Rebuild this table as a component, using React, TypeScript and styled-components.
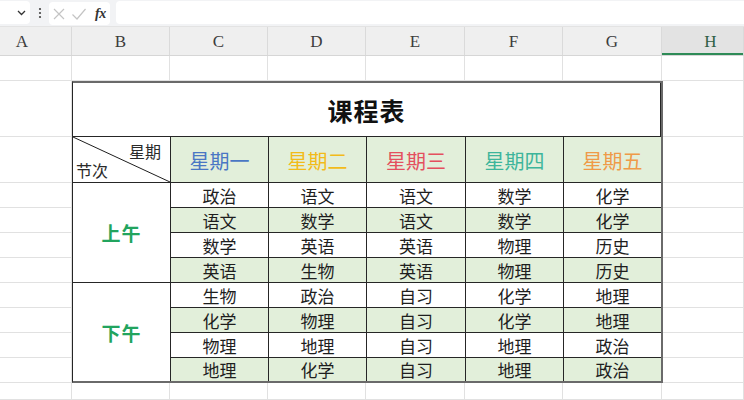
import React from 'react';
import styled, { createGlobalStyle } from 'styled-components';

const GlobalStyle = createGlobalStyle`
  html, body { margin: 0; padding: 0; background: #ffffff; }
  body {
    width: 744px; height: 400px; overflow: hidden;
    font-family: "Noto Sans CJK SC", "Liberation Sans", sans-serif;
  }
  * { box-sizing: border-box; }
`;

const COLS = '72px 98px 98px 98px 99px 98px 99px 82px';
const GRID = '#e1e1e1';
const INK = '#262626';
const FILL = '#e2efda';

const Page = styled.div`
  width: 744px;
  height: 400px;
  display: flex;
  flex-direction: column;
  overflow: hidden;
  background: #fff;
`;

const FormulaBar = styled.div`
  height: 27px;
  flex: none;
  display: flex;
  align-items: flex-start;
  padding-top: 1px;
  background: #f2f3f5;
  border-bottom: 1px solid #e3e3e3;
`;

const NameBox = styled.div`
  width: 30px;
  height: 23px;
  background: #fff;
  border-radius: 0 4px 4px 0;
  display: flex;
  align-items: center;
  justify-content: flex-end;
  padding-right: 4px;
`;

const Grip = styled.div`
  width: 19px;
  height: 23px;
  display: flex;
  align-items: center;
  justify-content: center;
`;

const FxBox = styled.div`
  width: 61px;
  height: 23px;
  margin-top: 1px;
  background: #fff;
  border-radius: 4px;
  display: flex;
  align-items: center;
  padding-left: 3px;
  gap: 5px;
`;

const FxIcon = styled.span`
  font-family: "Liberation Serif", serif;
  font-style: italic;
  font-weight: 700;
  font-size: 14px;
  color: #333;
  margin-left: 3px;
  letter-spacing: -0.5px;
`;

const FormulaInput = styled.div`
  flex: 1;
  height: 23px;
  margin-left: 6px;
  background: #fff;
  border-radius: 4px 0 0 4px;
`;

const ColHeader = styled.div`
  height: 29px;
  flex: none;
  display: grid;
  grid-template-columns: ${COLS};
  background: #efefef;
  border-bottom: 1px solid #d6d6d6;
`;

const ColLabel = styled.div<{ $active?: boolean; $shift?: number }>`
  display: flex;
  align-items: center;
  justify-content: center;
  padding-top: 2px;
  padding-left: ${p => (p.$shift && p.$shift > 0 ? p.$shift : 0)}px;
  padding-right: ${p => (p.$shift && p.$shift < 0 ? -p.$shift : 0)}px;
  font-family: "Liberation Serif", "DejaVu Serif", serif;
  font-size: 17px;
  color: ${p => (p.$active ? '#2f5f45' : '#3c3c3c')};
  background: ${p => (p.$active ? '#e3e3e3' : 'transparent')};
  border-right: 1px solid #dadada;
  box-shadow: ${p => (p.$active ? 'inset 0 -2px 0 #2e8b57' : 'none')};
`;

const Sheet = styled.div`
  flex: 1;
  display: grid;
  grid-template-columns: ${COLS};
  grid-template-rows: 25px 56px 46px repeat(8, 25px) 1fr;
`;

const GridCell = styled.div<{ $col?: number; $row?: number }>`
  border-right: 1px solid ${GRID};
  border-bottom: 1px solid ${GRID};
  grid-column: ${p => p.$col ?? 'auto'};
  grid-row: ${p => p.$row ?? 'auto'};
`;

const Table = styled.div`
  grid-column: 2 / 8;
  grid-row: 2 / 12;
  margin-right: -1px;
  display: grid;
  grid-template-columns: 98px 98px 98px 99px 98px 1fr;
  grid-template-rows: 54px 46px repeat(7, 25px) 1fr;
  border-top: 2px solid #6a6a6a;
  border-right: 2px solid #6a6a6a;
  border-bottom: 2px solid #6a6a6a;
  border-left: 1px solid ${INK};
  background: #fff;
`;

const Cell = styled.div<{ $fill?: boolean; $lastCol?: boolean; $lastRow?: boolean }>`
  display: flex;
  align-items: center;
  justify-content: center;
  background: ${p => (p.$fill ? FILL : '#fff')};
  border-right: ${p => (p.$lastCol ? 'none' : `1px solid ${INK}`)};
  border-bottom: ${p => (p.$lastRow ? 'none' : `1px solid ${INK}`)};
  font-size: 17px;
  color: #1e1e1e;
  line-height: 1;
`;

const TitleCell = styled(Cell)`
  grid-column: 1 / -1;
  font-size: 25px;
  font-weight: 700;
  color: #111;
  letter-spacing: 1px;
  padding-top: 2px;
`;

const DayCell = styled(Cell)<{ $color: string }>`
  font-size: 20px;
  color: ${p => p.$color};
  padding-top: 2px;
`;

const SessionCell = styled(Cell)`
  grid-row: span 4;
  font-size: 19px;
  font-weight: 700;
  color: #22a45e;
  letter-spacing: 1px;
`;

const DiagCell = styled.div`
  position: relative;
  display: flex;
  flex-direction: column;
  justify-content: space-between;
  padding: 6px 9px 2px 3px;
  border-right: 1px solid ${INK};
  border-bottom: 1px solid ${INK};
  font-size: 16px;
  color: #2a2a2a;
  line-height: 1.1;
`;

const DiagTop = styled.span`
  align-self: flex-end;
`;

const DiagBottom = styled.span`
  align-self: flex-start;
`;

const DiagLine = styled.svg`
  position: absolute;
  inset: 0;
  width: 100%;
  height: 100%;
  pointer-events: none;
`;

const days: { name: string; color: string }[] = [
  { name: '星期一', color: '#4a77c4' },
  { name: '星期二', color: '#f2bb1a' },
  { name: '星期三', color: '#e4505e' },
  { name: '星期四', color: '#3db59b' },
  { name: '星期五', color: '#ef9a48' },
];

const schedule: string[][] = [
  ['政治', '语文', '语文', '数学', '化学'],
  ['语文', '数学', '语文', '数学', '化学'],
  ['数学', '英语', '英语', '物理', '历史'],
  ['英语', '生物', '英语', '物理', '历史'],
  ['生物', '政治', '自习', '化学', '地理'],
  ['化学', '物理', '自习', '化学', '地理'],
  ['物理', '地理', '自习', '地理', '政治'],
  ['地理', '化学', '自习', '地理', '政治'],
];

const letters = ['A', 'B', 'C', 'D', 'E', 'F', 'G', 'H'];
const labelShift: Record<string, number> = { A: -27, H: 16 };

export default function App() {
  const bodyRows: React.ReactNode[] = [];
  schedule.forEach((row, r) => {
    if (r % 4 === 0) {
      bodyRows.push(
        <SessionCell key={`s${r}`} $lastRow={r === 4}>
          {r === 0 ? '上午' : '下午'}
        </SessionCell>
      );
    }
    row.forEach((subject, c) => {
      bodyRows.push(
        <Cell
          key={`c${r}-${c}`}
          $fill={r % 2 === 1}
          $lastCol={c === 4}
          $lastRow={r === schedule.length - 1}
        >
          {subject}
        </Cell>
      );
    });
  });

  return (
    <Page>
      <GlobalStyle />
      <FormulaBar>
        <NameBox>
          <svg width="9" height="6" viewBox="0 0 9 6">
            <path d="M1 1 L4.5 4.5 L8 1" fill="none" stroke="#333" strokeWidth="1.3" />
          </svg>
        </NameBox>
        <Grip>
          <svg width="4" height="12" viewBox="0 0 4 12">
            <circle cx="2" cy="2" r="1.1" fill="#444" />
            <circle cx="2" cy="6" r="1.1" fill="#444" />
            <circle cx="2" cy="10" r="1.1" fill="#444" />
          </svg>
        </Grip>
        <FxBox>
          <svg width="14" height="14" viewBox="0 0 14 14">
            <path d="M2 2 L12 12 M12 2 L2 12" stroke="#c4c4c4" strokeWidth="1.2" fill="none" />
          </svg>
          <svg width="16" height="14" viewBox="0 0 16 14">
            <path d="M1.5 7.5 L6 12 L14.5 2" stroke="#c4c4c4" strokeWidth="1.2" fill="none" />
          </svg>
          <FxIcon>fx</FxIcon>
        </FxBox>
        <FormulaInput />
      </FormulaBar>

      <ColHeader>
        {letters.map(l => (
          <ColLabel key={l} $active={l === 'H'} $shift={labelShift[l]}>
            {l}
          </ColLabel>
        ))}
      </ColHeader>

      <Sheet>
        {letters.map((l, i) => (
          <GridCell key={`r1${l}`} $col={i + 1} $row={1} />
        ))}
        {Array.from({ length: 10 }).map((_, i) => (
          <GridCell key={`a${i}`} $col={1} $row={i + 2} />
        ))}
        {Array.from({ length: 10 }).map((_, i) => (
          <GridCell key={`h${i}`} $col={8} $row={i + 2} />
        ))}
        <Table>
          <TitleCell>课程表</TitleCell>
          <DiagCell>
            <DiagLine preserveAspectRatio="none">
              <line x1="0" y1="0" x2="100%" y2="100%" stroke="#1e1e1e" strokeWidth="1" />
            </DiagLine>
            <DiagTop>星期</DiagTop>
            <DiagBottom>节次</DiagBottom>
          </DiagCell>
          {days.map((d, i) => (
            <DayCell key={d.name} $fill $color={d.color} $lastCol={i === 4}>
              {d.name}
            </DayCell>
          ))}
          {bodyRows}
        </Table>
        {letters.map((l, i) => (
          <GridCell key={`rl${l}`} $col={i + 1} $row={12} />
        ))}
      </Sheet>
    </Page>
  );
}
